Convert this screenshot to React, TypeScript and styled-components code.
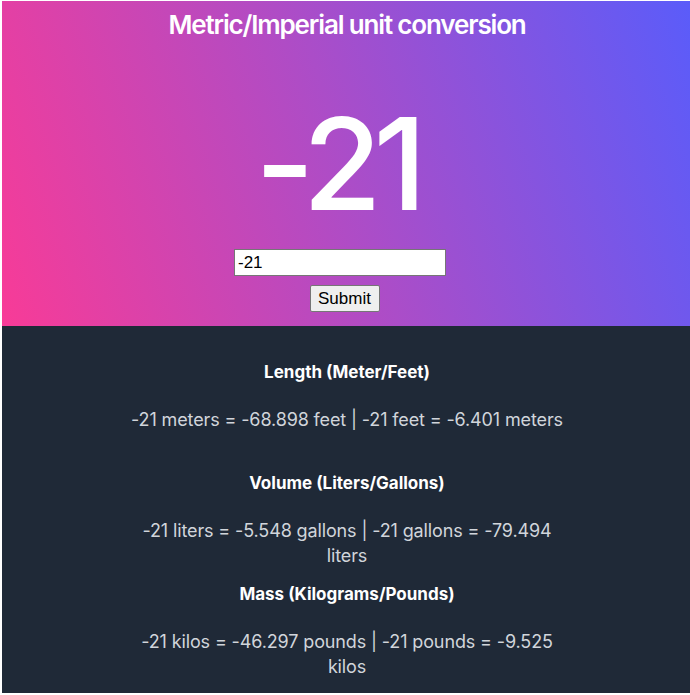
import React, { useState } from "react";
import styled, { createGlobalStyle } from "styled-components";

const Global = createGlobalStyle`
  html, body { margin: 0; padding: 0; background: #ffffff; overflow: hidden; }
  #root { width: 690px; margin: 1px 0 0 2px; }
`;

const Page = styled.div`
  display: flex;
  flex-direction: column;
  font-family: Inter, "Noto Sans", sans-serif;
`;

const Hero = styled.header`
  height: 325px;
  box-sizing: border-box;
  display: flex;
  flex-direction: column;
  align-items: center;
  background: linear-gradient(72deg, #f83b97 0%, #ab4dc8 50%, #5a5cfa 100%);
  color: #ffffff;
`;

const Title = styled.h1`
  margin: 4px 0 0;
  font-size: 26px;
  line-height: 40px;
  font-weight: 600;
  letter-spacing: -1.15px;
`;

const BigValue = styled.div`
  margin: 56px 20px 0 0;
  font-size: 128px;
  line-height: 126px;
  font-weight: 500;
  letter-spacing: -8px;
`;

const Form = styled.form`
  margin-top: 22px;
  display: flex;
  flex-direction: column;
  align-items: center;
  gap: 9px;
`;

const Input = styled.input`
  box-sizing: border-box;
  width: 212px;
  height: 27px;
  margin-right: 14px;
  padding: 1px 3px;
  border: 1px solid #767676;
  background: #ffffff;
  font-family: "Liberation Sans", Arial, sans-serif;
  font-size: 17px;
  color: #000000;
  outline: none;
`;

const Button = styled.button`
  box-sizing: border-box;
  width: 70px;
  height: 27px;
  margin-right: 5px;
  padding: 0;
  border: 1px solid #767676;
  border-radius: 2px;
  background: #efefef;
  font-family: "Liberation Sans", Arial, sans-serif;
  font-size: 17px;
  color: #000000;
`;

const Results = styled.main`
  background: #1f2937;
  padding-top: 34px;
  display: flex;
  flex-direction: column;
  align-items: center;
`;

const Section = styled.section`
  height: 111px;
  width: 448px;
  display: flex;
  flex-direction: column;
  align-items: center;
  text-align: center;
`;

const Heading = styled.h2`
  margin: 0 0 23px;
  font-size: 17px;
  line-height: 24px;
  font-weight: 700;
  color: #ffffff;
`;

const Line = styled.p`
  margin: 0;
  font-size: 18px;
  line-height: 25px;
  letter-spacing: -0.13px;
  color: #d1d5db;
`;

const fmt = (n: number) => String(Math.round(n * 1000) / 1000);

export default function App() {
  const [text, setText] = useState("-21");
  const [value, setValue] = useState(-21);
  const v = value;
  const conv = [
    {
      title: "Length (Meter/Feet)",
      line: `${v} meters = ${fmt(v * 3.28084)} feet | ${v} feet = ${fmt(v / 3.28084)} meters`,
    },
    {
      title: "Volume (Liters/Gallons)",
      line: `${v} liters = ${fmt(v * 0.264172)} gallons | ${v} gallons = ${fmt(v / 0.264172)} liters`,
    },
    {
      title: "Mass (Kilograms/Pounds)",
      line: `${v} kilos = ${fmt(v * 2.20462)} pounds | ${v} pounds = ${fmt(v / 2.20462)} kilos`,
    },
  ];
  return (
    <Page>
      <Global />
      <Hero>
        <Title>Metric/Imperial unit conversion</Title>
        <BigValue>{value}</BigValue>
        <Form
          onSubmit={(e) => {
            e.preventDefault();
            const n = Number(text);
            if (!Number.isNaN(n)) setValue(n);
          }}
        >
          <Input value={text} onChange={(e) => setText(e.target.value)} />
          <Button type="submit">Submit</Button>
        </Form>
      </Hero>
      <Results>
        {conv.map((c) => (
          <Section key={c.title}>
            <Heading>{c.title}</Heading>
            <Line>{c.line}</Line>
          </Section>
        ))}
      </Results>
    </Page>
  );
}
